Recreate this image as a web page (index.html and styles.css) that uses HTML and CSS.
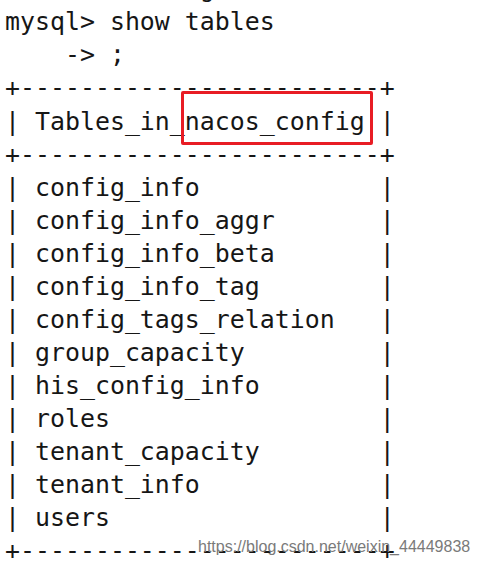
FILE: index.html
```html
<!DOCTYPE html>
<html>
<head>
<meta charset="utf-8">
<link rel="stylesheet" href="styles.css">
</head>
<body>
<div class="screen">
<pre class="term">Database changed
mysql&gt; show tables
    -&gt; ;
+------------------------+
| Tables_in_nacos_config |
+------------------------+
| config_info            |
| config_info_aggr       |
| config_info_beta       |
| config_info_tag        |
| config_tags_relation   |
| group_capacity         |
| his_config_info        |
| roles                  |
| tenant_capacity        |
| tenant_info            |
| users                  |
+------------------------+</pre>
<div class="highlight"></div>
<div class="watermark">https://blog.csdn.net/weixin_44449838</div>
</div>
</body>
</html>
```
FILE: styles.css
```css
html, body {
  margin: 0;
  padding: 0;
  background: #ffffff;
}
.screen {
  position: relative;
  width: 479px;
  height: 566px;
  overflow: hidden;
  background: #ffffff;
}
.term {
  margin: -27.7px 0 0 0;
  padding: 0 0 0 5px;
  font-family: "DejaVu Sans Mono", monospace;
  font-size: 24.9px;
  line-height: 33.05px;
  color: #161616;
  white-space: pre;
}
.highlight {
  position: absolute;
  left: 181px;
  top: 91px;
  width: 192px;
  height: 54px;
  box-sizing: border-box;
  border: 3px solid #e81c24;
  border-radius: 2px;
}
.watermark {
  position: absolute;
  left: 198px;
  top: 538px;
  font-family: "Liberation Sans", Arial, sans-serif;
  font-size: 16px;
  line-height: 18px;
  color: #7a7a7a;
  white-space: nowrap;
}
```
